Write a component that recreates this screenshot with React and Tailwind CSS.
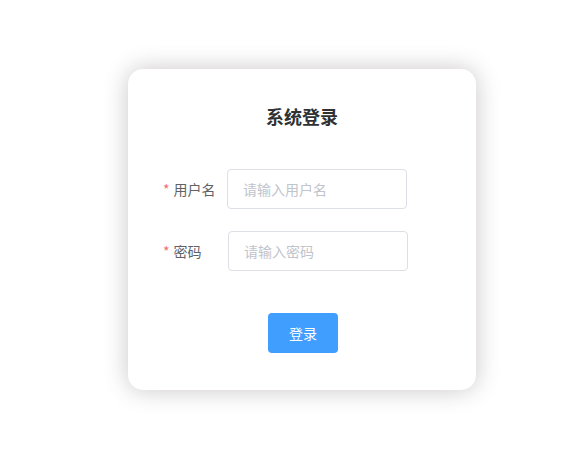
import React from 'react';

function FormRow({ label, placeholder, labelWidth, type = 'text' }) {
    return (
        <div className="flex items-center h-[40px]">
            <label className={`${labelWidth} shrink-0 flex items-center text-[14px] text-[#606266]`}>
                <span className="text-[#f56c6c] mr-[4px]">*</span>
                {label}
            </label>
            <input
                type={type}
                placeholder={placeholder}
                className="w-[180px] h-[40px] border border-[#dcdfe6] rounded-[4px] px-[15px] text-[14px] text-[#606266] placeholder:text-[#c0c4cc] outline-none bg-white"
            />
        </div>
    );
}

export default function App() {
    return (
        <div
            className="w-[588px] h-[468px] bg-white pl-[128px] pt-[69px]"
            style={{ fontFamily: '"Noto Sans CJK SC", "Noto Sans", sans-serif' }}
        >
            <div className="w-[348px] h-[321px] bg-white rounded-[15px] shadow-[0_0_25px_#cac6c6] pt-[35px] pl-[35px] pr-[35px]">
                {/* 标题 */}
                <h3 className="h-[25px] leading-[25px] text-[18px] font-bold text-[#303133] text-center">系统登录</h3>

                <div className="mt-[40px] flex flex-col gap-[22px]">
                    <FormRow label="用户名" placeholder="请输入用户名" labelWidth="w-[64px]" />
                    <FormRow label="密码" placeholder="请输入密码" labelWidth="w-[65px]" type="password" />
                </div>

                <div className="mt-[42px] flex justify-center pl-[2px]">
                    <button className="w-[70px] h-[40px] rounded-[4px] bg-[#409eff] text-white text-[14px]">登录</button>
                </div>
            </div>
        </div>
    );
}
